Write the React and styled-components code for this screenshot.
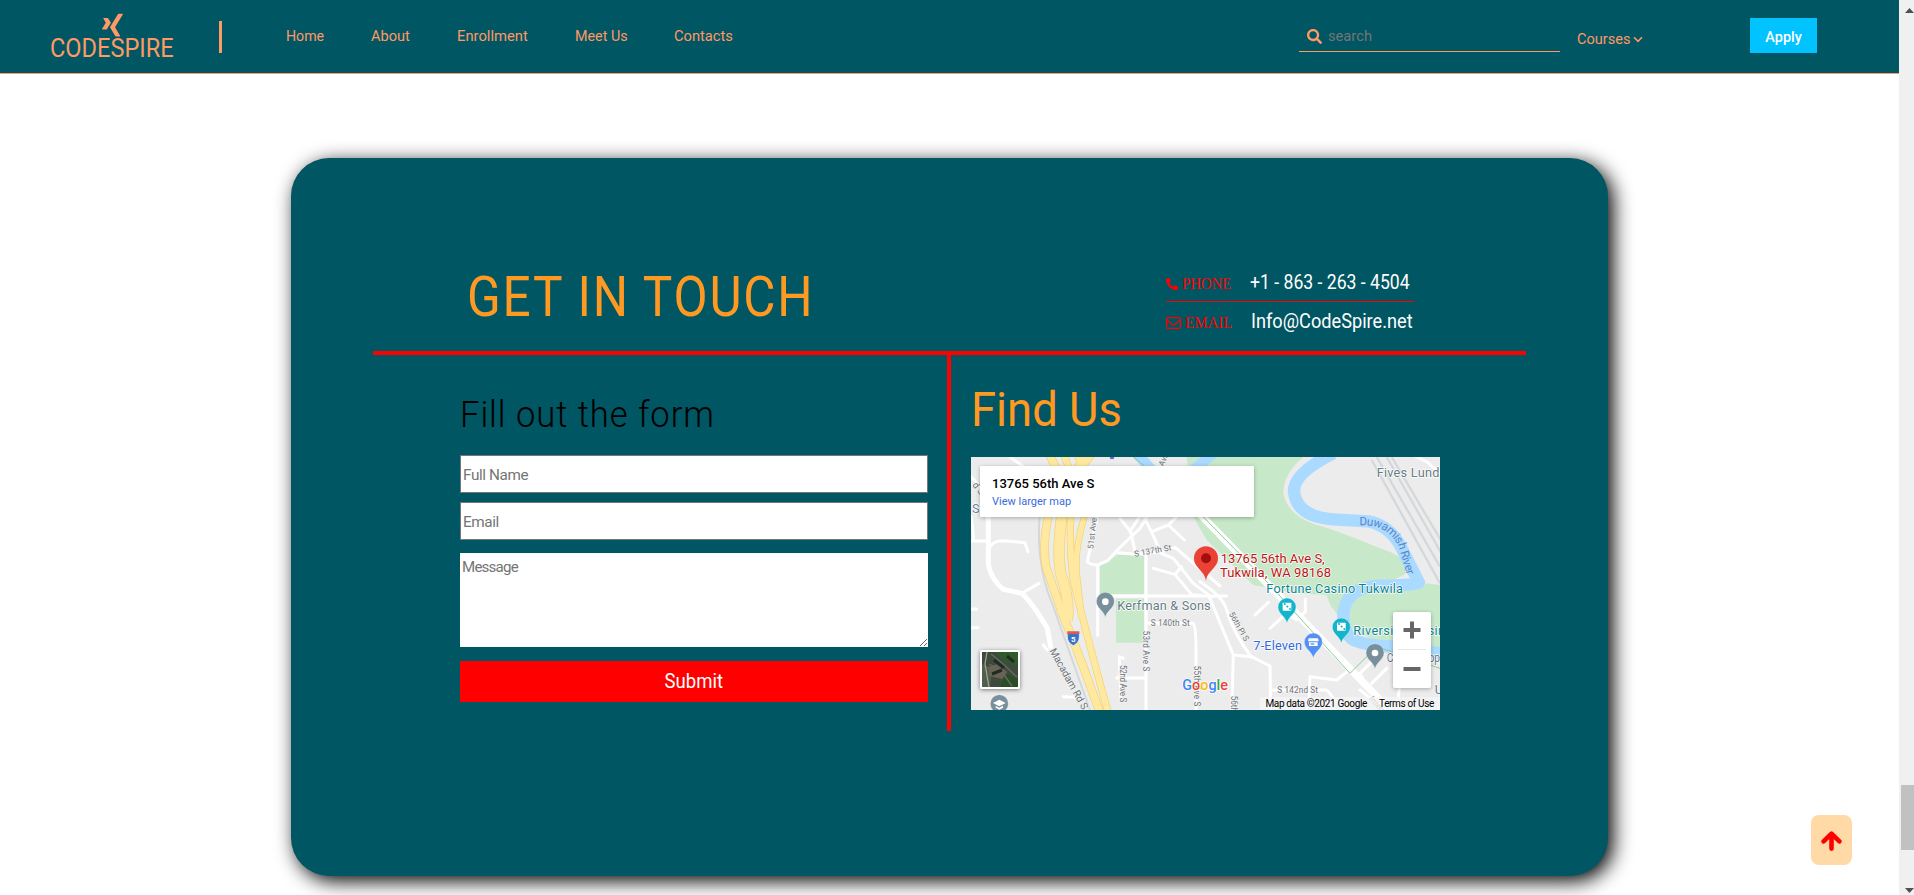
import React from 'react';
import styled, { createGlobalStyle } from 'styled-components';
import { FaXing, FaSearch, FaPhoneAlt } from 'react-icons/fa';

const TEAL = '#005662';
const CORAL = '#ff9966';
const ORANGE = '#ff9922';

const Global = createGlobalStyle`
  * { box-sizing: border-box; }
  body { margin: 0; background: #fff; font-family: Roboto, "Liberation Sans", sans-serif; overflow: hidden; }
  button, input, textarea { font-family: inherit; border-radius: 0; }
  h1, h2, h3 { margin: 0; font-weight: 400; white-space: nowrap; }
`;

const Page = styled.div`
  display: flex;
  width: 1914px;
  height: 895px;
  overflow: hidden;
`;
const Main = styled.main`
  width: 1899px;
  height: 895px;
  overflow: hidden;
`;

const Fit = styled.span`
  display: inline-block;
  white-space: nowrap;
  transform: scaleX(${(p) => p.$x || 1});
  transform-origin: ${(p) => p.$origin || 'left'} center;
`;

/* ---------- header ---------- */
const Header = styled.header`
  display: flex;
  align-items: flex-start;
  height: 74px;
  background: ${TEAL};
  border-bottom: 1px solid ${CORAL};
  color: ${CORAL};
`;
const Brand = styled.div`
  display: flex;
  flex-direction: column;
  align-items: center;
  width: 122px;
  margin: 12px 0 0 51px;
  svg { display: block; width: 21px; height: 26px; }
`;
const BrandName = styled.span`
  font-size: 25.5px;
  line-height: 26px;
  margin: -3px 0 0 0;
  width: 124px;
`;
const Divider = styled.div`
  width: 3px;
  height: 32px;
  margin: 21px 64px 0 46px;
  background: ${CORAL};
`;
const Nav = styled.nav`
  display: flex;
  margin-top: 26px;
`;
const NavLink = styled.a`
  width: ${(p) => p.$w}px;
  font-size: 15.3px;
  line-height: 20px;
  white-space: nowrap;
`;
const SearchBox = styled.div`
  display: flex;
  align-items: flex-start;
  width: 261px;
  height: 35px;
  margin: 17px 0 0 auto;
  padding: 12px 0 0 8px;
  border-bottom: 1px solid ${CORAL};
  svg { width: 15px; height: 15px; }
`;
const SearchText = styled.span`
  margin: -3px 0 0 6px;
  font-size: 15.3px;
  line-height: 20px;
  color: #757575;
`;
const Courses = styled.div`
  display: flex;
  width: 173px;
  margin: 29px 0 0 17px;
  font-size: 15.3px;
  line-height: 20px;
`;
const CoursesLabel = styled.span`
  width: 56px;
`;
const Apply = styled.button`
  width: 67px;
  height: 35px;
  margin: 18px 82px 0 0;
  padding: 2px 0 0;
  border: 0;
  background: #00c3ff;
  color: #fff;
  font-size: 15.5px;
  font-weight: 500;
`;

/* ---------- card ---------- */
const Card = styled.section`
  width: 1317px;
  height: 718px;
  margin: 84px 0 0 291px;
  padding: 0 82px;
  border-radius: 38px;
  background: ${TEAL};
  box-shadow: 5px 5px 20px #000;
`;
const CardTop = styled.div`
  display: flex;
  justify-content: space-between;
  align-items: flex-start;
  height: 197px;
  border-bottom: 4px solid #f00;
`;
const Title = styled.h1`
  margin: 109px 0 0 94px;
  width: 345px;
  font-size: 56px;
  line-height: 60px;
  letter-spacing: 2px;
  color: ${ORANGE};
`;
const ContactList = styled.div`
  width: 248px;
  margin: 106px 112px 0 0;
`;
const ContactRow = styled.div`
  display: flex;
  height: 38px;
  padding-top: ${(p) => (p.$first ? 0 : 1)}px;
  border-bottom: ${(p) => (p.$first ? '1px solid #f00' : '0')};
  color: #f00;
`;
const ContactLabel = styled.div`
  display: flex;
  flex: none;
  align-items: center;
  gap: 4px;
  width: ${(p) => p.$w}px;
  height: 40px;
  font: 16px/18px "Liberation Serif", serif;
`;
const ContactValue = styled.div`
  width: 164px;
  flex: none;
  font-size: 19.5px;
  line-height: 38px;
  color: #fff;
`;
const CardBody = styled.div`
  display: flex;
  align-items: flex-start;
`;
const FormColumn = styled.form`
  display: flex;
  flex-direction: column;
  width: 574px;
  padding: 40px 19px 0 87px;
`;
const FormTitle = styled.h3`
  height: 40px;
  margin-bottom: 20px;
  font-size: 36px;
  font-weight: 300;
  line-height: 40px;
  letter-spacing: 1px;
  color: #000;
`;
const Input = styled.input`
  width: 468px;
  height: 38px;
  margin-bottom: ${(p) => p.$gap}px;
  padding: 3px 2px 1px;
  border: 1px solid #767676;
  font-size: 15.3px;
  letter-spacing: -0.4px;
  &::placeholder { color: #757575; }
`;
const Message = styled.textarea`
  display: block;
  width: 468px;
  height: 94px;
  margin-bottom: 14px;
  padding: 5px 2px;
  border: 0;
  font-size: 15.1px;
  line-height: 19px;
  letter-spacing: -0.8px;
  &::placeholder { color: #757575; }
`;
const Submit = styled.button`
  width: 468px;
  height: 41px;
  padding: 0;
  border: 0;
  background: #f00;
  color: #fff;
  font-size: 19.5px;
`;
const VerticalRule = styled.div`
  width: 4px;
  height: 376px;
  background: #f00;
`;
const MapColumn = styled.div`
  padding: 30px 0 0 20px;
`;
const MapTitle = styled.h2`
  height: 50px;
  margin-bottom: 22px;
  font-size: 48px;
  line-height: 50px;
  color: ${ORANGE};
`;

/* ---------- map ---------- */
const MapFrame = styled.div`
  position: relative;
  width: 469px;
  height: 253px;
  overflow: hidden;
  background: #ececec;
  > svg { display: block; }
`;
const PlaceCard = styled.div`
  position: absolute;
  left: 9px;
  top: 9px;
  width: 274px;
  height: 51px;
  padding: 10px 12px;
  background: #fff;
  border-radius: 1px;
  box-shadow: 0 1px 4px rgba(0, 0, 0, 0.3);
`;
const PlaceName = styled.div`
  font-size: 13px;
  font-weight: 500;
  line-height: 16px;
  color: #000;
`;
const PlaceLink = styled.a`
  display: block;
  margin-top: 3px;
  font-size: 11px;
  line-height: 13px;
  color: #3a6bdd;
`;
const Satellite = styled.div`
  position: absolute;
  left: 9px;
  top: 193px;
  width: 40px;
  height: 39px;
  border: 2px solid #fff;
  border-radius: 2px;
  box-shadow: 0 1px 4px rgba(0, 0, 0, 0.5);
  svg { display: block; }
`;
const ZoomControl = styled.div`
  position: absolute;
  right: 9px;
  top: 155px;
  width: 38px;
  height: 76px;
  background: #fff;
  border-radius: 2px;
  box-shadow: 0 1px 4px rgba(0, 0, 0, 0.3);
  svg { display: block; }
`;
const Attribution = styled.div`
  position: absolute;
  right: 0;
  bottom: 0;
  display: flex;
  gap: 12px;
  height: 13px;
  padding: 1px 6px 0 5px;
  background: rgba(245, 245, 245, 0.75);
  font-size: 10px;
  letter-spacing: -0.35px;
  line-height: 12px;
  white-space: nowrap;
  color: #000;
`;
const ToTop = styled.button`
  position: absolute;
  left: 1811px;
  top: 815px;
  display: flex;
  align-items: center;
  justify-content: center;
  width: 41px;
  height: 50px;
  padding: 2px 1px 0 0;
  border: 0;
  border-radius: 8px !important;
  background: #ffd9a6;
  color: #f00;
`;

/* ---------- scrollbar ---------- */
const Scrollbar = styled.div`
  display: flex;
  flex-direction: column;
  width: 15px;
  height: 895px;
  padding: 8px 0 2px 6px;
  background: #f0f0f0;
  overflow: hidden;
`;
const ArrowMark = styled.svg`
  display: block;
  flex: none;
  width: 9px;
  height: 5px;
`;
const Thumb = styled.div`
  width: 13px;
  height: 65px;
  margin: 772px 0 0 -4px;
  flex: none;
  background: #c1c1c1;
  & + svg { margin-top: auto; }
`;

const roads = [
  'M85 200L85 345Q95 390 130 418L185 430Q215 455 262 535L272 590',
  'M33 273L80 273 M90 290Q100 272 130 272L195 278L204 305 M185 430L237 400',
  'M33 477L50 477 M33 533L54 533 M250 585L262 600 M310 740L345 742',
  'M412 200L382 335Q390 345 413 345L413 556 M413 345L443 332L475 297L540 235L562 200',
  'M475 308L520 312Q600 312 645 292L780 408 M480 205L512 245L524 300 M510 245L542 195',
  'M552 200L582 262L604 310L640 325L700 400L745 434 M575 245L625 225L673 270 M625 225L650 200',
  'M558 318L558 780 M440 438L800 438 M580 355L645 373L665 350 M645 373L695 434L760 440',
  'M560 520L700 520Q708 530 708 600L708 780 M470 684L556 684 M490 625L478 620L482 740',
  'M720 395Q790 440 800 480Q820 550 875 622 M745 434L820 615L815 780 M820 615L875 620L930 648L932 780',
  'M885 495L925 457 M930 535L980 490L1010 510L1036 485L1036 447',
  'M932 720L1020 720 M1045 780L1050 680L1130 690L1165 662 M1075 720L1100 720L1130 755',
  'M1200 720L1250 760L1275 780 M1210 690L1200 670L1250 620 M1235 700L1280 655 M1320 700L1310 780',
  'M150 21L205 60 M33 80L70 120 M33 200Q40 240 40 270 M1370 21L1400 35L1440 70',
];

function Pin({ x, y, color, children }) {
  return (
    <g transform={`translate(${x} ${y})`}>
      <path d="M0 48C-3 28-27 20-27-1A27 27 0 1 1 27-1C27 20 3 28 0 48Z" fill={color} stroke="#fff" strokeWidth="1.5" strokeOpacity=".6" />
      {children}
    </g>
  );
}

function Dice() {
  return (
    <g>
      <rect x="-13" y="-14" width="26" height="24" rx="2" fill="#fff" />
      <path d="M-9 -12L11 7" stroke="#12b5cb" strokeWidth="5" strokeDasharray="6 5" />
    </g>
  );
}

function StreetMap() {
  return (
    <svg width="469" height="253" viewBox="33 21 1407 759" fontFamily="Roboto, sans-serif">
      <rect x="33" y="21" width="1407" height="759" fill="#ececec" />
      <g fill="#c8e9c9">
        <path d="M680 21L1030 21Q970 70 970 130Q985 205 1090 230Q1180 260 1260 295Q1340 320 1345 360Q1325 395 1230 395Q1160 400 1140 500Q1110 475 1100 435L1010 430L880 405L740 270L700 200Z" />
        <path d="M1400 400L1440 405L1440 600L1240 570L1165 530Q1160 440 1230 425L1390 408Z" />
        <path d="M443 332L475 314L552 318L552 432L420 432L420 345Z M468 446L552 446L552 578L468 578Z" />
      </g>
      <g fill="none" stroke="#aadaff" strokeLinejoin="round">
        <path d="M1120 10Q1000 70 1002 125Q1010 200 1120 208L1225 214Q1285 225 1320 285L1377 398Q1370 405 1240 408Q1155 420 1150 495Q1150 550 1180 570Q1230 590 1310 590L1440 610" strokeWidth="37" />
        <path d="M530 10L575 60M700 60L760 10" strokeWidth="32" />
      </g>
      <g fill="none" stroke="#d5d8db">
        <path d="M240 190Q225 340 280 470L390 780" strokeWidth="6" />
        <path d="M1235 30L1440 400M1250 21L1440 350M1280 21L1450 320M1295 21L1460 300" strokeWidth="7" />
      </g>
      <g fill="none" stroke="#fff" strokeLinecap="round" strokeLinejoin="round">
        {roads.map((d, i) => (
          <path key={i} d={d} strokeWidth={i === 0 ? 15 : 9} />
        ))}
        <path d="M640 110L1290 780" strokeWidth="22" />
      </g>
      <path d="M520 21L690 160L930 405L1170 670L1250 590L1440 655" fill="none" stroke="#8ecb9b" strokeWidth="3" />
      {[['#f5d16f', 0], ['#ffe89f', 4]].map(([c, inset]) => (
        <g key={c} fill="none" stroke={c} strokeLinejoin="round">
          <path d="M267 10L300 80Q240 240 258 350L310 500Q350 590 420 790" strokeWidth={26 - inset} />
          <path d="M390 10L325 100Q285 270 302 370Q330 450 322 510" strokeWidth={34 - inset} />
          <path d="M310 10L340 90Q322 260 340 390Q370 520 445 790" strokeWidth={22 - inset} />
          <path d="M350 10L375 80L373 200Q340 310 352 390L365 505" strokeWidth={20 - inset} />
        </g>
      ))}
      <g fontSize="24.5" fill="#6d7378" stroke="#f4f4f4" strokeWidth="4" paintOrder="stroke" strokeLinejoin="round">
        <text transform="translate(400 298) rotate(-84)">51st Ave S</text>
        <text transform="translate(524 320) rotate(-10)" textLength="113">S 137th St</text>
        <text x="572" y="529" textLength="117">S 140th St</text>
        <text transform="translate(550 542) rotate(90)" textLength="122">53rd Ave S</text>
        <text transform="translate(479 645) rotate(90)" textLength="112">52nd Ave S</text>
        <text transform="translate(701 647) rotate(90)" textLength="122">55th Ave S</text>
        <text transform="translate(806 492) rotate(60)" textLength="96">56th Pl S</text>
        <text transform="translate(812 737) rotate(90)">56th Ave S</text>
        <text x="952" y="728" textLength="122">S 142nd St</text>
        <text transform="translate(610 50) rotate(-65)">Ave</text>
        <text transform="translate(1226 748) rotate(48)">Interurban</text>
        <text transform="translate(268 602) rotate(61)" fontSize="31" textLength="205">Macadam Rd S</text>
        <text transform="translate(36 106) rotate(50)" fontSize="28">d S</text>
      </g>
      <g fontSize="38" stroke="#fff" strokeWidth="4" paintOrder="stroke" strokeLinejoin="round">
        <text x="472" y="480" fill="#647b85" textLength="280">Kerfman &amp; Sons</text>
        <text x="1250" y="81" fill="#647b85" textLength="188">Fives Lund</text>
        <text x="919" y="430" fill="#078590" textLength="410">Fortune Casino Tukwila</text>
        <text x="1180" y="556" fill="#078590" textLength="298">Riverside Casino</text>
        <text x="880" y="601" fill="#2f6adc" textLength="146">7-Eleven</text>
        <text x="1280" y="636" fill="#647b85" textLength="178" lengthAdjust="spacingAndGlyphs">Cash&amp;Shopp</text>
        <text x="1424" y="732" fill="#647b85">U</text>
        <text x="36" y="188" fill="#6f82a0">S</text>
        <g fill="#bb1512" fontSize="39">
          <text x="782" y="340" textLength="312">13765 56th Ave S,</text>
          <text x="780" y="380" textLength="333">Tukwila, WA 98168</text>
        </g>
      </g>
      <path id="river-label" d="M1198 226Q1280 220 1316 290L1346 392" fill="none" />
      <text fontSize="35" fill="#5985cc">
        <textPath href="#river-label" textLength="232">Duwamish River</textPath>
      </text>
      <circle cx="456" cy="21" r="7" fill="#5b68cf" />
      <g>
        <path d="M322 544H358V560Q358 578 340 587Q322 578 322 560Z" fill="#3974c5" stroke="#fff" strokeWidth="2" />
        <path d="M322 544H358V552H322Z" fill="#df5b4d" />
        <text x="340" y="576" fontSize="24" fontWeight="700" fill="#fff" textAnchor="middle">5</text>
      </g>
      <Pin x={436} y={455} color="#78909c"><circle r="10" fill="#fff" /></Pin>
      <Pin x={981} y={472} color="#12b5cb"><Dice /></Pin>
      <Pin x={1144} y={532} color="#12b5cb"><Dice /></Pin>
      <Pin x={1060} y={577} color="#5491f5">
        <path d="M-14 -12H14L16 -3H-16ZM-13 0H13V11H-13Z" fill="#fff" />
        <path d="M-8 3H3V7H-8Z" fill="#5491f5" />
      </Pin>
      <Pin x={1245} y={609} color="#78909c"><circle r="10" fill="#fff" /></Pin>
      <Pin x={118} y={762} color="#78909c">
        <path d="M-19 -3L0 -13L19 -3L0 7ZM-11 5L0 11L11 5V11L0 17L-11 11Z" fill="#fff" />
      </Pin>
      <path d="M738 394C735 362 702 355 702 325A36 36 0 1 1 774 325C774 355 741 362 738 394Z" fill="#ea4335" />
      <circle cx="738" cy="325" r="15" fill="#a50e0e" />
      <text x="667" y="721" fontSize="43" fontWeight="500" stroke="#fff" strokeWidth="4" paintOrder="stroke" textLength="137" lengthAdjust="spacingAndGlyphs">
        <tspan fill="#4285f4">G</tspan><tspan fill="#ea4335">o</tspan><tspan fill="#fbbc05">o</tspan>
        <tspan fill="#4285f4">g</tspan><tspan fill="#34a853">l</tspan><tspan fill="#ea4335">e</tspan>
      </text>
    </svg>
  );
}

const links = [
  ['Home', 84.5, 0.925],
  ['About', 86, 0.95],
  ['Enrollment', 118, 0.965],
  ['Meet Us', 99, 0.935],
  ['Contacts', 62, 0.96],
];

export default function App() {
  return (
    <Page>
      <Global />
      <Main>
        <Header>
          <Brand>
            <FaXing preserveAspectRatio="none" />
            <BrandName><Fit $x={0.925}>CODESPIRE</Fit></BrandName>
          </Brand>
          <Divider />
          <Nav>
            {links.map(([label, w, x]) => (
              <NavLink key={label} $w={w}><Fit $x={x}>{label}</Fit></NavLink>
            ))}
          </Nav>
          <SearchBox>
            <FaSearch />
            <SearchText><Fit $x={0.96}>search</Fit></SearchText>
          </SearchBox>
          <Courses>
            <CoursesLabel><Fit $x={0.95}>Courses</Fit></CoursesLabel>
            <svg width="10" height="20" viewBox="0 0 10 20" fill="none" stroke="currentColor" strokeWidth="1.6">
              <path d="M1 8.3L5 12.3L9 8.3" />
            </svg>
          </Courses>
          <Apply><Fit $x={0.93} $origin="center">Apply</Fit></Apply>
        </Header>

        <Card>
          <CardTop>
            <Title><Fit $x={0.885}>GET IN TOUCH</Fit></Title>
            <ContactList>
              <ContactRow $first>
                <ContactLabel $w={84}>
                  <FaPhoneAlt size={12} />
                  <Fit $x={0.92}>PHONE</Fit>
                </ContactLabel>
                <ContactValue><Fit $x={0.903}>+1 - 863 - 263 - 4504</Fit></ContactValue>
              </ContactRow>
              <ContactRow>
                <ContactLabel $w={85}>
                  <svg width="15" height="12" viewBox="0 0 15 12" fill="none" stroke="currentColor" strokeWidth="1.3">
                    <rect x=".65" y=".65" width="13.7" height="10.7" rx="1" />
                    <path d="M1 3.2L6 7.2Q7.5 8.3 9 7.2L14 3.2" />
                  </svg>
                  <Fit $x={0.935}>EMAIL</Fit>
                </ContactLabel>
                <ContactValue><Fit $x={0.933}>Info@CodeSpire.net</Fit></ContactValue>
              </ContactRow>
            </ContactList>
          </CardTop>
          <CardBody>
            <FormColumn>
              <FormTitle><Fit $x={0.96}>Fill out the form</Fit></FormTitle>
              <Input placeholder="Full Name" $gap={9} />
              <Input placeholder="Email" $gap={13} />
              <Message placeholder="Message" />
              <Submit type="button"><Fit $x={0.95} $origin="center">Submit</Fit></Submit>
            </FormColumn>
            <VerticalRule />
            <MapColumn>
              <MapTitle><Fit $x={0.945}>Find Us</Fit></MapTitle>
              <MapFrame>
                <StreetMap />
                <PlaceCard>
                  <PlaceName>13765 56th Ave S</PlaceName>
                  <PlaceLink>View larger map</PlaceLink>
                </PlaceCard>
                <Satellite>
                  <svg width="36" height="35" viewBox="0 0 36 35">
                    <rect width="36" height="35" fill="#3d4a3c" />
                    <path d="M12 0H36V14L25 11L18 5Z" fill="#31592c" />
                    <path d="M0 12L10 16L8 35H0Z" fill="#51604d" />
                    <path d="M6 15L16 12L25 20L20 27L8 24Z" fill="#6b6253" />
                    <path d="M26 22L36 27V35H18L22 26Z" fill="#2c4c27" />
                    <path d="M5 0L3 12L7 35" stroke="#a3a79b" strokeWidth="1.2" fill="none" />
                    <path d="M9 2L20 11L35 25M7 12L20 20L30 34" stroke="#626b60" strokeWidth="1.4" fill="none" />
                    <path d="M12 8L22 16M10 22L20 18M25 4L32 10" stroke="#202c22" strokeWidth="3" />
                  </svg>
                </Satellite>
                <ZoomControl>
                  <svg width="38" height="76" viewBox="0 0 38 76">
                    <path d="M10.5 18H27.5M19 9.5V26.5M10.5 57H27.5" stroke="#666" strokeWidth="4" />
                    <path d="M5 37.5H33" stroke="#e6e6e6" />
                  </svg>
                </ZoomControl>
                <Attribution>
                  <span>Map data ©2021 Google</span>
                  <span>Terms of Use</span>
                </Attribution>
              </MapFrame>
            </MapColumn>
          </CardBody>
        </Card>
        <ToTop aria-label="Back to top">
          <svg width="21" height="20" viewBox="0 0 21 20" fill="none" stroke="currentColor" strokeWidth="4.6" strokeLinecap="round" strokeLinejoin="round">
            <path d="M2.6 10.3L10.5 2.6L18.4 10.3M10.5 4V17.6" />
          </svg>
        </ToTop>
      </Main>
      <Scrollbar>
        <ArrowMark viewBox="0 0 9 5"><path d="M0 5L4.5 0L9 5Z" fill="#505050" /></ArrowMark>
        <Thumb />
        <ArrowMark viewBox="0 0 9 5"><path d="M0 0L4.5 5L9 0Z" fill="#505050" /></ArrowMark>
      </Scrollbar>
    </Page>
  );
}
